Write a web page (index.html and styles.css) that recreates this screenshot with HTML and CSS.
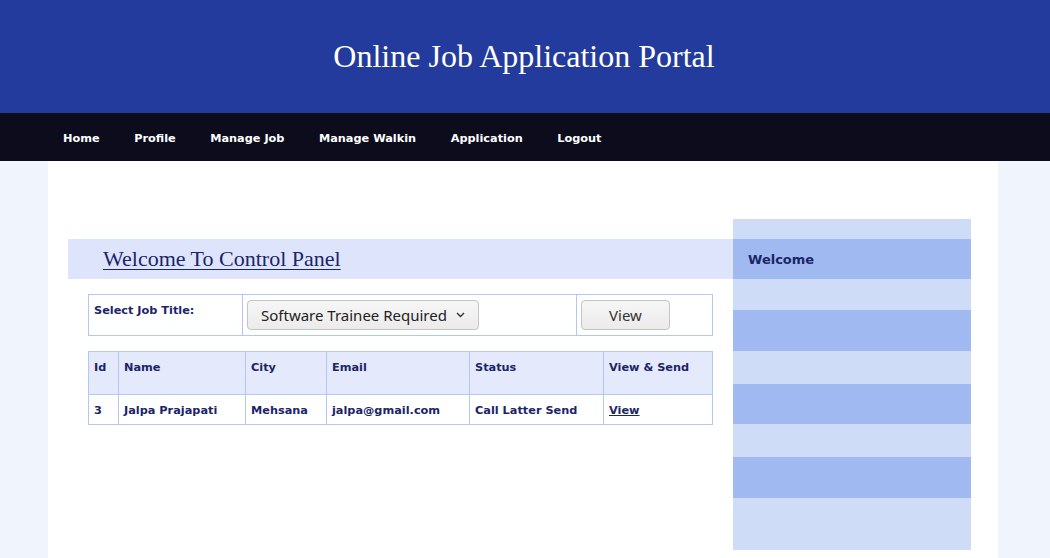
FILE: index.html
```html
<!DOCTYPE html>
<html>
<head>
<meta charset="utf-8">
<title>Online Job Application Portal</title>
<link rel="stylesheet" href="styles.css">
</head>
<body>
<header class="top">
  <h1 class="site-title">Online Job Application Portal</h1>
</header>
<nav class="menu">
  <a href="#">Home</a>
  <a href="#">Profile</a>
  <a href="#">Manage Job</a>
  <a href="#">Manage Walkin</a>
  <a href="#">Application</a>
  <a href="#">Logout</a>
</nav>
<div class="page">
  <main class="main">
    <h2 class="welcome"><a href="#">Welcome To Control Panel</a></h2>
    <table class="form-table">
      <tr>
        <td class="c-label">Select Job Title:</td>
        <td class="c-select">
          <span class="select-wrap">
            <select class="job-select">
              <option>Software Trainee Required</option>
            </select>
            <svg class="chev" width="9" height="6" viewBox="0 0 9 6"><path d="M1 1 L4.5 4.5 L8 1" fill="none" stroke="#333" stroke-width="1.4"/></svg>
          </span>
        </td>
        <td class="c-btn"><button class="view-btn">View</button></td>
      </tr>
    </table>
    <table class="data-table">
      <tr class="head">
        <th class="w-id">Id</th>
        <th class="w-name">Name</th>
        <th class="w-city">City</th>
        <th class="w-email">Email</th>
        <th class="w-status">Status</th>
        <th class="w-view">View &amp; Send</th>
      </tr>
      <tr class="row">
        <td>3</td>
        <td>Jalpa Prajapati</td>
        <td>Mehsana</td>
        <td>jalpa@gmail.com</td>
        <td>Call Latter Send</td>
        <td><a href="#">View</a></td>
      </tr>
    </table>
  </main>
  <aside class="side">
    <ul class="side-list">
      <li class="s-gap s1"></li>
      <li class="s-item s2">Welcome</li>
      <li class="s-gap s3"></li>
      <li class="s-item s4"></li>
      <li class="s-gap s5"></li>
      <li class="s-item s6"></li>
      <li class="s-gap s7"></li>
      <li class="s-item s8"></li>
      <li class="s-gap s9"></li>
    </ul>
  </aside>
</div>
</body>
</html>
```
FILE: styles.css
```css
html, body {
  margin: 0;
  padding: 0;
}
body {
  background: #f0f4fd;
  font-family: "DejaVu Sans", Verdana, sans-serif;
  color: #1b2568;
}
.top {
  background: #233b9c;
  height: 113px;
  display: flex;
  align-items: center;
  justify-content: center;
}
.site-title {
  margin: 0;
  font-family: "Liberation Serif", Georgia, serif;
  font-weight: normal;
  font-size: 32px;
  color: #ffffff;
  position: relative;
  left: -1px;
}
.menu {
  background: #0c0c1c;
  height: 48px;
  display: flex;
  align-items: center;
  padding-left: 63px;
  gap: 34.5px;
}
.menu a {
  color: #ffffff;
  text-decoration: none;
  font-weight: bold;
  font-size: 11.3px;
  position: relative;
  top: 1px;
}
.page {
  width: 950px;
  margin: 0 0 0 48px;
  background: #ffffff;
  box-sizing: border-box;
  padding: 58px 27px 8px 20px;
  display: flex;
  min-height: 397px;
}
.main {
  flex: 1;
  padding-top: 20px;
}
.welcome {
  margin: 0;
  height: 40px;
  background: #dfe4fd;
  display: flex;
  align-items: center;
  padding-left: 35px;
  font-family: "Liberation Serif", Georgia, serif;
  font-weight: normal;
  font-size: 22px;
}
.welcome a {
  color: #1b2568;
  text-decoration: underline;
  text-underline-offset: 3px;
  text-decoration-thickness: 1px;
}
table {
  border-collapse: collapse;
  margin: 15px 20px 0 20px;
  width: 625px;
}
td, th {
  border: 1px solid #b4c7f3;
  font-size: 11.3px;
  font-weight: bold;
  color: #1b2568;
  text-align: left;
}
.form-table td {
  height: 41px;
  box-sizing: border-box;
  vertical-align: top;
  padding: 0;
}
.c-label {
  width: 154px;
  padding: 9px 5px 0 5px !important;
}
.c-select {
  width: 334px;
  padding: 5px 4px 0 4px !important;
}
.c-btn {
  padding: 5px 4px 0 4px !important;
}
.select-wrap {
  position: relative;
  display: inline-block;
}
.job-select {
  appearance: none;
  -webkit-appearance: none;
  width: 232px;
  height: 30px;
  border: 1px solid #c4c4c4;
  border-radius: 4px;
  background: linear-gradient(#f6f6f6, #ebebeb);
  font-family: "Noto Sans", "Open Sans", sans-serif;
  font-size: 15px;
  color: #222222;
  padding: 0 0 1px 13px;
  margin: 0;
  display: block;
}
.chev {
  position: absolute;
  left: 209px;
  top: 12px;
  pointer-events: none;
}
.view-btn {
  width: 89px;
  height: 30px;
  border: 1px solid #c4c4c4;
  border-radius: 4px;
  background: linear-gradient(#f6f6f6, #ebebeb);
  font-family: "Noto Sans", "Open Sans", sans-serif;
  font-size: 15px;
  color: #333333;
  margin: 0;
  padding: 0 0 1px 0;
  display: block;
}
.data-table th {
  background: #e4eafb;
  height: 43px;
  box-sizing: border-box;
  vertical-align: top;
  padding: 9px 5px 0 5px;
}
.data-table .row td {
  height: 30px;
  box-sizing: border-box;
  padding: 1px 5px 0 5px;
  vertical-align: middle;
}
.data-table td a {
  color: #1b2568;
  text-decoration: underline;
}
.w-id { width: 30px; }
.w-name { width: 127px; }
.w-city { width: 81px; }
.w-email { width: 143px; }
.w-status { width: 134px; }
.side {
  width: 238px;
}
.side-list {
  list-style: none;
  margin: 0;
  padding: 0;
}
.side-list li {
  background: #cedcf7;
}
.side-list .s-item {
  background: #a0b9f1;
  display: flex;
  align-items: center;
  padding-left: 15px;
  font-weight: bold;
  font-size: 13px;
  color: #1b2568;
}
.s1 { height: 20px; }
.s2 { height: 40px; }
.s3 { height: 31px; }
.s4 { height: 41px; }
.s5 { height: 33px; }
.s6 { height: 40px; }
.s7 { height: 33px; }
.s8 { height: 41px; }
.s9 { height: 52px; }
```
